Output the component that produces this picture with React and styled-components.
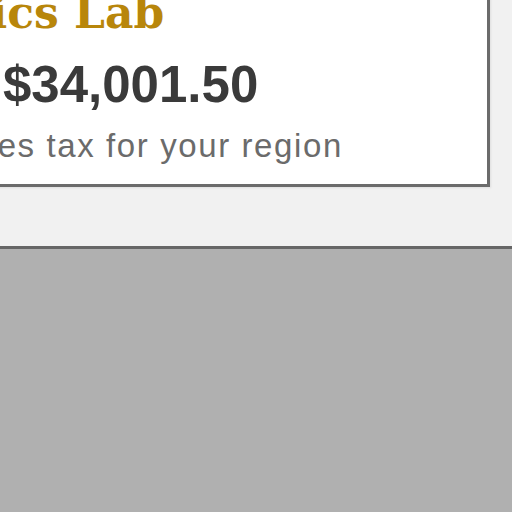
import React from 'react';
import styled, { createGlobalStyle } from 'styled-components';

const Global = createGlobalStyle`
  html, body { margin:0; padding:0; background:#f1f1f1; }
  body { overflow:hidden; }
`;

const Page = styled.div`
  min-height:100vh; display:flex; flex-direction:column; background:#f1f1f1;
`;
const Top = styled.section`
  display:flex; flex-direction:column; align-items:flex-start; padding-bottom:59px;
`;
const Card = styled.div`
  box-sizing:border-box; width:514px; margin:-30px 0 0 -24px;
  padding:20px 20px 22px 24px; background:#fff; border:3px solid #6b6b6b;
  box-shadow:1px 1px 2px rgba(0,0,0,0.08);
  display:flex; flex-direction:column; white-space:nowrap;
`;
const Title = styled.div`
  margin-top:-2px; font-family:"DejaVu Serif", Georgia, serif; font-weight:bold;
  font-size:44px; line-height:1; color:#b8860b; text-indent:${p => p.shift}px;
`;
const Price = styled.div`
  margin-top:24px; font-family:"Liberation Sans", Arial, sans-serif; font-weight:bold;
  font-size:51px; line-height:1; color:#3a3a3a;
`;
const Note = styled.div`
  margin-top:19px; font-family:"Liberation Sans", Arial, sans-serif; font-size:33px;
  letter-spacing:1.6px; line-height:1; color:#6b6b6b; text-indent:${p => p.shift}px;
`;
const Bottom = styled.section`
  flex:1; background:#b0b0b0; border-top:3px solid #666;
`;

export default function App() {
    return (
        <Page>
            <Global />
            <Top>
                <Card>
                    <Title shift={-128}>Physics Lab</Title>
                    <Price>$34,001.50</Price>
                    <Note shift={-103}>Includes tax for your region</Note>
                </Card>
            </Top>
            <Bottom />
        </Page>
    );
}
